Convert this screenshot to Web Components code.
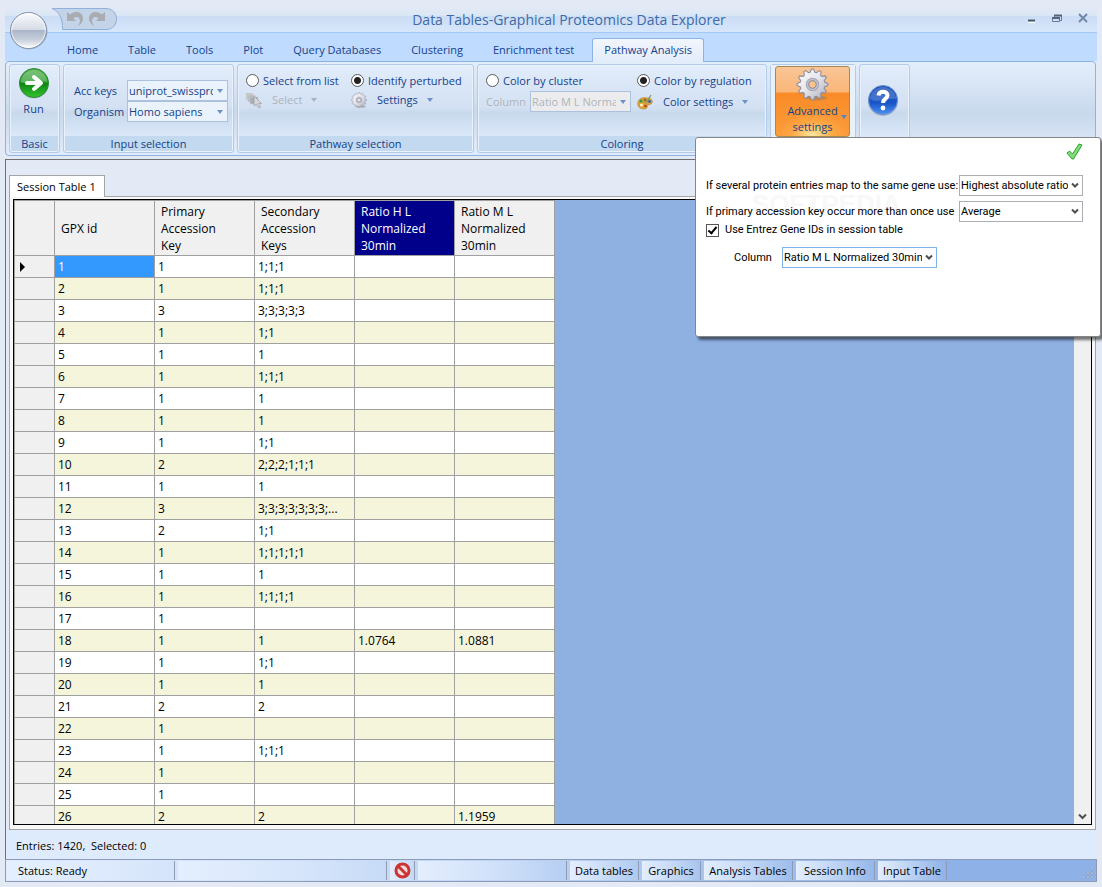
<!DOCTYPE html>
<html lang="en">
  <head>
    <meta charset="UTF-8" />
    <title>Data Tables-Graphical Proteomics Data Explorer</title>
    <style>
      body {
        margin: 0;
        background: #e3eaf5;
        color: #000;
        font: 11px/17px "Open Sans", "Noto Sans", sans-serif;
        overflow: hidden;
      }
    </style>
    <script>
      const define = (name, html, setup) =>
        customElements.define(
          name,
          class extends HTMLElement {
            connectedCallback() {
              if (this.shadowRoot) return;
              this.attachShadow({ mode: "open" }).innerHTML = html;
              if (setup) setup(this, this.shadowRoot);
            }
          }
        );

      const ICONS = {
        run: `<svg width="32" height="32" viewBox="0 0 32 32">
          <defs><linearGradient id="run" x2="0" y2="1"><stop stop-color="#54b04f"/><stop offset=".48" stop-color="#239a26"/><stop offset=".5" stop-color="#0c8411"/><stop offset="1" stop-color="#35c42f"/></linearGradient></defs>
          <ellipse cx="16" cy="17" rx="15" ry="14.500" fill="#8fa9b8" opacity=".6"/>
          <circle cx="16" cy="16" r="14.500" fill="url(#run)" stroke="#2d8a35"/>
          <path d="M3 15a13 12 0 0 1 26 0C20 11 12 19 3 15z" fill="#fff" opacity=".25"/>
          <path d="M9 16h13M16 10l7 6-7 6" fill="none" stroke="#fff" stroke-width="4" stroke-linecap="round" stroke-linejoin="round"/></svg>`,
        help: `<svg width="32" height="32" viewBox="0 0 32 32">
          <defs><linearGradient id="help" x2="0" y2="1"><stop stop-color="#1c4fb5"/><stop offset=".6" stop-color="#1a55c8"/><stop offset="1" stop-color="#4d92f2"/></linearGradient></defs>
          <circle cx="16" cy="17" r="15" fill="#8f9bb5" opacity=".7"/>
          <circle cx="16" cy="16" r="14.500" fill="url(#help)" stroke="#6d93d8"/>
          <path d="M3 15a13 12 0 0 1 26 0C20 13 12 20 3 15z" fill="#fff" opacity=".18"/>
          <path d="M11.500 11.500c.4-5 9-5 9 0 0 3.200-4.500 3.200-4.500 7.500" fill="none" stroke="#fff" stroke-width="4"/><circle cx="16" cy="24" r="2.400" fill="#fff"/></svg>`,
        gear: (s) => {
          let d = "";
          for (let i = 0; i < 48; i++) {
            const a = ((i - 0.5) * Math.PI) / 24;
            const r = i % 4 < 2 ? 15 : 12;
            d += (i ? "L" : "M") + (16 + r * Math.cos(a)).toFixed(2) + " " + (16 + r * Math.sin(a)).toFixed(2);
          }
          return `<svg width="${s}" height="${s}" viewBox="0 0 32 32">
          <defs><linearGradient id="gear${s}" y2="1"><stop stop-color="#fff"/><stop offset=".5" stop-color="#e4e4ea"/><stop offset="1" stop-color="#a9a9b8"/></linearGradient></defs>
          <ellipse cx="20" cy="29" rx="10" ry="2.500" fill="#777" opacity=".4"/>
          <path d="${d}Z" fill="url(#gear${s})" stroke="#8c8c9c"/>
          <circle cx="16" cy="16" r="6" fill="#c4c4d0" stroke="#a4a4b2"/><circle cx="16" cy="16" r="3.600" fill="${s > 20 ? "#fbc48c" : "#e2ecf8"}" stroke="#88889a"/></svg>`;
        },
        select: `<svg width="16" height="16" viewBox="0 0 16 16"><path d="M0 1h7v7H0z" fill="#c3c6ca"/><path d="M2 3h7v7H2z" fill="#b5b8bd" stroke="#ccd0d6" stroke-width=".6"/><path d="M4 5h8v7H4z" fill="#a9acb2" stroke="#ccd0d6" stroke-width=".6"/><path d="M8 4v10l2.500-2 2 4 2-1-2-3.500h3z" fill="#d4d6da" stroke="#999ca2" stroke-width=".7"/></svg>`,
        palette: `<svg width="16" height="16" viewBox="0 0 16 16"><path d="M1 8c1-4 5-5 9-4 4 0 6 2 5 5-1 2-3 1-4 2s0 4-4 4c-5 0-7-3-6-7z" fill="#d9a03a" stroke="#c48a2c" stroke-width=".7"/><circle cx="4" cy="7" r="1.500" fill="#2e9e3c"/><circle cx="8" cy="6" r="1.400" fill="#8a6a30"/><circle cx="12.500" cy="7.500" r="1.400" fill="#2a62b8"/><circle cx="4.500" cy="11" r="1.500" fill="#fff3c8"/><circle cx="8.500" cy="12" r="1.200" fill="#c13322"/><path d="M9 9l5-8" stroke="#7a9a5a" stroke-width="1.300"/></svg>`,
      };

      const CARET = `<svg class="caret" width="6" height="4" viewBox="0 0 6 4"><path d="M0 0h6L3 4z" fill="currentColor"/></svg>`;

      // Drop-down with its own label; "look" picks the ribbon or the dialog skin
      define(
        "labelled-select",
        `<style>
          :host { display: flex; align-items: center; }
          label { flex: 1; white-space: nowrap; }
          .box { display: grid; width: var(--box, 101px); height: 21px; }
          select, svg { grid-area: 1 / 1; }
          select {
            appearance: none; box-sizing: border-box; width: 100%; height: 100%; margin: 0;
            padding: 0 14px 0 1px; font: inherit; color: inherit; border: 1px solid #abc1de;
            border-radius: 0; background: #eaf2fb; opacity: 1; overflow: hidden;
          }
          svg { justify-self: end; align-self: center; margin-right: 5px; color: #6b93c8; pointer-events: none; }
          .chev { display: none; }
          :host([look="dialog"]) select { background: #fff; border-color: #abadb3; }
          :host([look="dialog"][focused]) select { border-color: #7eb4ea; }
          :host([look="dialog"]) .caret { display: none; }
          :host([look="dialog"]) .chev { display: block; margin-right: 4px; }
          :host([disabled]) { color: #b0b4ba; }
          :host([disabled]) select { background: #ececee; }
        </style>
        <label for="s"></label>
        <span class="box"><select id="s"></select>${CARET}
          <svg class="chev" width="8" height="7" viewBox="0 0 8 7"><path d="M1 1.500l3 3 3-3" fill="none" stroke="#4f4f4f" stroke-width="2"/></svg></span>`,
        (el, root) => {
          root.querySelector("label").textContent = el.getAttribute("label");
          const select = root.querySelector("select");
          select.disabled = el.hasAttribute("disabled");
          select.add(new Option(el.getAttribute("value")));
        }
      );

      define(
        "ribbon-group",
        `<style>
          :host {
            display: flex; flex-direction: column; box-sizing: border-box; height: 89px;
            border: 1px solid #b3cbe8; border-radius: 3px; box-shadow: inset 0 0 0 1px #e8f1fc;
            background: linear-gradient(#e3eefb, #dbe7f7 20%, #d3e1f3 48%, #c8d9ec 55%, #d9e7f8 80%, #e0ecfb);
          }
          .body { flex: 1; min-height: 0; }
          .caption { height: 15px; margin: 0 1px 1px; line-height: 15px; text-align: center; background: #c2d9f0; }
          :host(:not([caption])) .caption { display: none; }
        </style>
        <div class="body"><slot></slot></div><div class="caption"></div>`,
        (el, root) => {
          root.querySelector(".caption").textContent = el.getAttribute("caption") || "";
        }
      );

      define(
        "menu-button",
        `<style>
          :host { display: flex; }
          button { display: flex; align-items: center; padding: 0; border: 0; background: none; font: inherit; color: inherit; white-space: nowrap; }
          span { margin: 0 9px 0 10px; }
          .caret { color: #6b93c8; }
          button:disabled { color: #adb3ba; }
          button:disabled .caret { color: #a9b2be; }
        </style><button><slot name="icon"></slot><span><slot></slot></span>${CARET}</button>`,
        (el, root) => {
          const icon = ICONS[el.getAttribute("icon")];
          root.querySelector("slot[name=icon]").outerHTML = typeof icon === "function" ? icon(16) : icon;
          root.querySelector("button").disabled = el.hasAttribute("disabled");
        }
      );

      // Two radios side by side, one tool under each
      define(
        "radio-pair",
        `<style>
          :host { display: grid; grid-template-columns: var(--first) auto; padding: 7px 8px 0; row-gap: 2px; align-items: center; }
          label { display: flex; align-items: center; gap: 4px; height: 17px; white-space: nowrap; }
          input {
            appearance: none; box-sizing: border-box; width: 13px; height: 13px; margin: 0;
            border: 1px solid #5a5a5a; border-radius: 50%; background: #fff;
          }
          input:checked { background: radial-gradient(circle, #222 3px, #fff 4px); }
        </style>
        <label><input type="radio" name="r" /><span></span></label>
        <label><input type="radio" name="r" checked /><span></span></label>
        <slot name="left"></slot><slot name="right"></slot>`,
        (el, root) => {
          const [a, b] = root.querySelectorAll("span");
          a.textContent = el.getAttribute("first");
          b.textContent = el.getAttribute("second");
        }
      );

      define(
        "title-bar",
        `<style>
          :host {
            position: relative; display: flex; height: 28px; box-sizing: border-box; color: #3e6aaa;
            border-bottom: 1px solid #a4c8f5;
            background: linear-gradient(#e3eaf5, #dce7f5 38%, #cbddf4 42%, #d7e6fb);
          }
          .orb { position: absolute; left: 4px; top: 6px; z-index: 1; padding: 0; border: 0; background: none; line-height: 0; }
          .qat { margin: 2px 0 0 46px; }
          h1 { flex: 1; margin: 0; padding-right: 6px; font: inherit; font-size: 14px; line-height: 30px; text-align: center; }
          .controls { display: flex; gap: 14px; margin: 6px 8px 0 0; }
          .controls button { width: 12px; height: 14px; padding: 0; border: 0; background: none; line-height: 0; }
        </style>
        <button class="orb" aria-label="Application menu"><svg width="40" height="40" viewBox="0 0 40 40">
          <defs><linearGradient id="o" x2="0" y2="1"><stop stop-color="#fbfcfd"/><stop offset=".48" stop-color="#d5dbe6"/><stop offset=".5" stop-color="#aab6c9"/><stop offset=".75" stop-color="#c6cedb"/><stop offset="1" stop-color="#fff"/></linearGradient></defs>
          <circle cx="20" cy="20" r="18.500" fill="#8292aa" opacity=".6"/><circle cx="19.500" cy="19.500" r="18" fill="url(#o)" stroke="#8190a8"/><circle cx="19.500" cy="19.500" r="16.800" fill="none" stroke="#fff" opacity=".7"/></svg></button>
        <svg class="qat" width="68" height="24" viewBox="0 0 68 24">
          <path d="M1 1.500h54c14 0 14 21 0 21H11.500C12 12 8 4 1 1.500z" fill="#c3d3e8" stroke="#92b1da"/>
          <path d="M16 5l3 2.500c6-5 13-2 13 4 0 3-2 5.500-5 7.500 3-4.500 2.500-8.500-1-9-1.500 0-2.500.5-3.500 1.500l2.500 2.500H16z" fill="#a9acb1"/>
          <path d="M54 5l-3 2.500c-6-5-13-2-13 4 0 3 2 5.500 5 7.500-3-4.500-2.500-8.500 1-9 1.500 0 2.500.5 3.500 1.500L45 14h9z" fill="#a9acb1"/></svg>
        <h1>Data Tables-Graphical Proteomics Data Explorer</h1>
        <div class="controls">
          <button aria-label="Minimize"><svg width="12" height="14"><path d="M3 9.500h7" stroke="#4c5b70" stroke-width="2"/><path d="M3 11.500h7" stroke="#fff"/></svg></button>
          <button aria-label="Restore"><svg width="12" height="14"><path d="M3.500 6V4.500h7v5H9M1.500 6.500h7v4h-7z" fill="none" stroke="#667b9a"/><path d="M1 7h8M3 4.500h8" stroke="#56657b" stroke-width="2"/></svg></button>
          <button aria-label="Close"><svg width="12" height="14"><path d="M2 3l8 8M10 3l-8 8" stroke="#7288aa" stroke-width="2"/></svg></button>
        </div>`
      );

      define(
        "ribbon-tabs",
        `<style>
          :host { display: flex; align-items: end; gap: 6px; height: 28px; padding-left: 50px; background: #bfdbff; }
          button {
            height: 24px; margin-bottom: -1px; padding: 0 11px 2px; border: 1px solid transparent; border-bottom: 0;
            border-radius: 3px 3px 0 0; background: none; font: inherit; color: #15428b; white-space: nowrap;
          }
          button[aria-selected="true"] { position: relative; border-color: #8db2e3; background: linear-gradient(#f2f6fc, #e2ecfa); }
        </style>`,
        (el, root) => {
          for (const name of el.getAttribute("tabs").split("|")) {
            const tab = document.createElement("button");
            tab.textContent = name;
            tab.setAttribute("role", "tab");
            tab.setAttribute("aria-selected", name === el.getAttribute("selected"));
            root.append(tab);
          }
        }
      );

      define(
        "settings-popup",
        `<style>
          :host {
            display: block; box-sizing: border-box; width: 406px; height: 200px; padding: 5px 17px 0 10px;
            border: 1px solid #868686; border-radius: 3px; background: #fff; color: #000;
            box-shadow: 3px 3px 3px #0008; font: 11px/14px Roboto, "Liberation Sans", sans-serif;
          }
          .ok { display: block; width: 17px; height: 17px; margin-left: auto; padding: 0; border: 0; background: none; line-height: 0; }
          form { display: grid; position: relative; margin-top: 15px; }
          .wide { --box: 124px; margin-bottom: 5px; }
          .wide + .wide { margin-bottom: 1px; }
          label { display: flex; align-items: center; gap: 6px; height: 14px; }
          input { appearance: none; display: grid; place-items: center; box-sizing: border-box; width: 13px; height: 13px; margin: 0; border: 1px solid #555; }
          input:checked::before { content: ""; width: 3px; height: 7px; margin-bottom: 2px; border: solid #000; border-width: 0 2px 2px 0; transform: rotate(40deg); }
          .column { --box: 155px; width: 203px; margin: 10px 0 0 28px; }
          .mark { position: absolute; left: 56px; top: 50px; font: bold 26px/32px "Liberation Sans", sans-serif; color: #f8f8f8; pointer-events: none; }
        </style>
        <span class="mark" aria-hidden="true">SOFTPEDIA</span>
        <button class="ok" aria-label="Apply"><svg width="17" height="17" viewBox="0 0 17 17"><path d="M1 10l2.500-2 3 3L13 1l3 1-8.500 14H6z" fill="#7fdc78" stroke="#27a62e"/></svg></button>
        <form>
          <labelled-select class="wide" look="dialog" label="If several protein entries map to the same gene use:" value="Highest absolute ratio"></labelled-select>
          <labelled-select class="wide" look="dialog" label="If primary accession key occur more than once use" value="Average"></labelled-select>
          <label><input type="checkbox" checked />Use Entrez Gene IDs in session table</label>
          <labelled-select class="column" look="dialog" focused label="Column" value="Ratio M L Normalized 30min"></labelled-select>
        </form>`
      );

      define(
        "ribbon-bar",
        `<style>
          :host {
            display: flex; gap: 3px; box-sizing: border-box; height: 95px; padding: 2px 3px; margin-right: 1px;
            border: 1px solid #8db2e3; border-radius: 4px; color: #15428b; white-space: nowrap;
            background: linear-gradient(#e3eefb, #dbe7f7 20%, #c8d9ec 55%, #e0ecfb);
          }
          button { font: inherit; color: inherit; border: 0; background: none; padding: 0; }
          .run { display: block; width: 100%; padding: 2px 2px 0 0; }
          .run svg, .advanced svg { display: block; margin: 0 auto; }
          .run svg { margin-bottom: 1px; }
          .inputs { display: grid; padding: 15px 5px 0 10px; }
          .menu { position: relative; padding: 1px 4px; background: #e6f2f8; }
          .advanced {
            position: relative; display: block; width: 75px; height: 71px; line-height: 16px; border: 1px solid #a98850; border-radius: 3px;
            background: radial-gradient(ellipse 34px 24px at 50% 100%, #ffe9a0, #ffb44d88 60%, transparent), linear-gradient(#f9c596, #fbb678 36%, #f98b28 38%, #fb9c3c);
          }
          .advanced .caret { position: absolute; right: 2px; bottom: 17px; color: #5b83bd; }
          .advanced svg:first-child { margin-top: 0; margin-bottom: 2px; }
          settings-popup { position: absolute; top: 72px; left: -76px; z-index: 2; white-space: normal; }
          .help { display: block; margin: 19px 7px; line-height: 0; }
        </style>
        <ribbon-group caption="Basic" style="width: 51px"><button class="run">${ICONS.run}Run</button></ribbon-group>
        <ribbon-group caption="Input selection" style="width: 171px"><div class="inputs">
          <labelled-select label="Acc keys" value="uniprot_swissprot"></labelled-select>
          <labelled-select label="Organism" value="Homo sapiens"></labelled-select></div></ribbon-group>
        <ribbon-group caption="Pathway selection" style="width: 237px">
          <radio-pair first="Select from list" second="Identify perturbed" style="--first: 105px">
            <menu-button slot="left" icon="select" disabled>Select</menu-button>
            <menu-button slot="right" icon="gear">Settings</menu-button>
          </radio-pair></ribbon-group>
        <ribbon-group caption="Coloring" style="width: 290px">
          <radio-pair first="Color by cluster" second="Color by regulation" style="--first: 151px">
            <labelled-select slot="left" disabled label="Column" value="Ratio M L Normalized" style="width: 145px"></labelled-select>
            <menu-button slot="right" icon="palette">Color settings</menu-button>
          </radio-pair></ribbon-group>
        <ribbon-group style="width: 86px"><div class="menu">
          <button class="advanced">${ICONS.gear(33)}Advanced<br />settings${CARET}</button>
          <settings-popup></settings-popup></div></ribbon-group>
        <ribbon-group style="width: 51px"><button class="help" aria-label="Help">${ICONS.help}</button></ribbon-group>`
      );

      const KEYS = [
        ["1", "1;1;1"], ["1", "1;1;1"], ["3", "3;3;3;3;3"], ["1", "1;1"], ["1", "1"], ["1", "1;1;1"],
        ["1", "1"], ["1", "1"], ["1", "1;1"], ["2", "2;2;2;1;1;1"], ["1", "1"], ["3", "3;3;3;3;3;3;3;..."],
        ["2", "1;1"], ["1", "1;1;1;1;1"], ["1", "1"], ["1", "1;1;1;1"], ["1", ""], ["1", "1", "1.0764", "1.0881"],
        ["1", "1;1"], ["1", "1"], ["2", "2"], ["1", ""], ["1", "1;1;1"], ["1", ""], ["1", ""], ["2", "2", "", "1.1959"],
      ];

      define(
        "session-grid",
        `<style>
          :host { display: flex; flex: 1; min-height: 0; border: 1px solid #000; background: #8eb1e2; overflow: hidden; font-size: 12px; }
          .view { flex: 1; overflow: hidden; }
          table { width: 541px; table-layout: fixed; border-collapse: separate; border-spacing: 0; border-left: 1px solid #a0a0a0; }
          th, td { box-sizing: border-box; border: solid #a0a0a0; border-width: 0 1px 1px 0; font-weight: normal; text-align: left; white-space: nowrap; }
          thead th { height: 56px; padding: 1px 6px 0; border-top: 1px solid #a0a0a0; background: #f0f0f0; line-height: 17px; }
          thead .marked { background: #00008b; color: #fff; }
          td { height: 22px; padding: 0 3px; background: #fff; line-height: 20px; }
          tr:nth-child(even) td { background: #f5f5dc; }
          tbody th { padding: 0 0 0 5px; background: #f0f0f0; line-height: 0; }
          td.current { background: #3399ff !important; color: #fff; }
          .scroll { display: flex; flex-direction: column; justify-content: end; align-items: center; width: 17px; padding-bottom: 4px; box-sizing: border-box; background: #f0f0f0; }
        </style>
        <div class="view"><table>
          <colgroup><col style="width: 40px" /><col span="5" style="width: 100px" /></colgroup>
          <thead><tr><th></th><th>GPX id</th><th>Primary<br />Accession<br />Key</th><th>Secondary<br />Accession<br />Keys</th>
            <th class="marked">Ratio H L<br />Normalized<br />30min</th><th>Ratio M L<br />Normalized<br />30min</th></tr></thead>
          <tbody></tbody>
        </table></div>
        <div class="scroll"><svg width="9" height="7" viewBox="0 0 9 7"><path d="M1 1.500l3.500 3.500L8 1.500" fill="none" stroke="#505050" stroke-width="2"/></svg></div>`,
        (el, root) => {
          const arrow = `<svg width="5" height="10"><path d="M0 0l5 5-5 5z"/></svg>`;
          root.querySelector("tbody").innerHTML = KEYS.map(
            ([primary, secondary, hl = "", ml = ""], i) =>
              `<tr><th>${i ? "" : arrow}</th><td${i ? "" : ' class="current"'}>${i + 1}</td><td>${primary}</td><td>${secondary}</td><td>${hl}</td><td>${ml}</td></tr>`
          ).join("");
        }
      );

      define(
        "session-pane",
        `<style>
          :host { display: flex; flex: 1; min-height: 0; flex-direction: column; margin: 3px 1px 0 0; border: solid #6f6f6f; border-width: 1px 0 0 1px; }
          .tabs { display: flex; height: 21px; padding: 15px 3px 0; }
          .tabs button { box-sizing: border-box; height: 22px; padding: 0 8px 0 7px; border: 1px solid #a5a5a5; border-bottom: 0; background: #fff; font: inherit; position: relative; z-index: 1; }
          .page { display: flex; flex: 1; min-height: 0; margin-left: 3px; padding: 2px 3px 4px; border: 1px solid #a5a5a5; background: #f8f8f8; }
          .totals { height: 29px; padding-left: 10px; background: #deebfd; line-height: 32px; white-space: pre; }
        </style>
        <div class="tabs"><button>Session Table 1</button></div>
        <div class="page"><session-grid></session-grid></div>
        <div class="totals">Entries: 1420,  Selected: 0</div>`
      );

      define(
        "status-bar",
        `<style>
          :host { display: flex; gap: 3px; box-sizing: border-box; height: 23px; padding: 1px; border: 1px solid #8e9bb4; background: linear-gradient(90deg, #dfebfd, #c3d8f6 40%, #8eb2e8 85%); }
          span, button {
            display: flex; align-items: center; justify-content: center; box-sizing: border-box; padding: 0; border: 0; border-right: 1px solid #8e9bb4;
            background: linear-gradient(90deg, #e3eefe, #e3eefe00); font: inherit; white-space: nowrap;
          }
          .grip { margin: auto 0 0 auto; }
        </style>
        <span style="width: 168px; justify-content: start; padding-left: 11px">Status: Ready</span>
        <span style="width: 209px"></span>
        <span style="width: 25px"><svg width="17" height="17"><circle cx="8.500" cy="8.500" r="6.500" fill="#f4dcdc" stroke="#cc3333" stroke-width="3"/><path d="M4 4l9 9" stroke="#cc3333" stroke-width="3"/></svg></span>
        <span style="width: 149px"></span>
        <button style="width: 69px">Data tables</button>
        <button style="width: 59px">Graphics</button>
        <button style="width: 89px">Analysis Tables</button>
        <button style="width: 79px">Session Info</button>
        <button style="width: 69px">Input Table</button>
        <svg class="grip" width="12" height="12" fill="#c9d3e3" stroke="#7d8fae" stroke-width=".5"><path d="M8 0h2v2H8zM4 4h2v2H4zM8 4h2v2H8zM0 8h2v2H0zM4 8h2v2H4zM8 8h2v2H8z"/></svg>`
      );

      define(
        "app-window",
        `<style>
          :host { display: flex; flex-direction: column; box-sizing: border-box; height: 100vh; padding: 5px; }
        </style><slot></slot>`
      );
    </script>
  </head>
  <body>
    <app-window>
      <title-bar></title-bar>
      <ribbon-tabs
        tabs="Home|Table|Tools|Plot|Query Databases|Clustering|Enrichment test|Pathway Analysis"
        selected="Pathway Analysis"
      ></ribbon-tabs>
      <ribbon-bar></ribbon-bar>
      <session-pane></session-pane>
      <status-bar></status-bar>
    </app-window>
  </body>
</html>
